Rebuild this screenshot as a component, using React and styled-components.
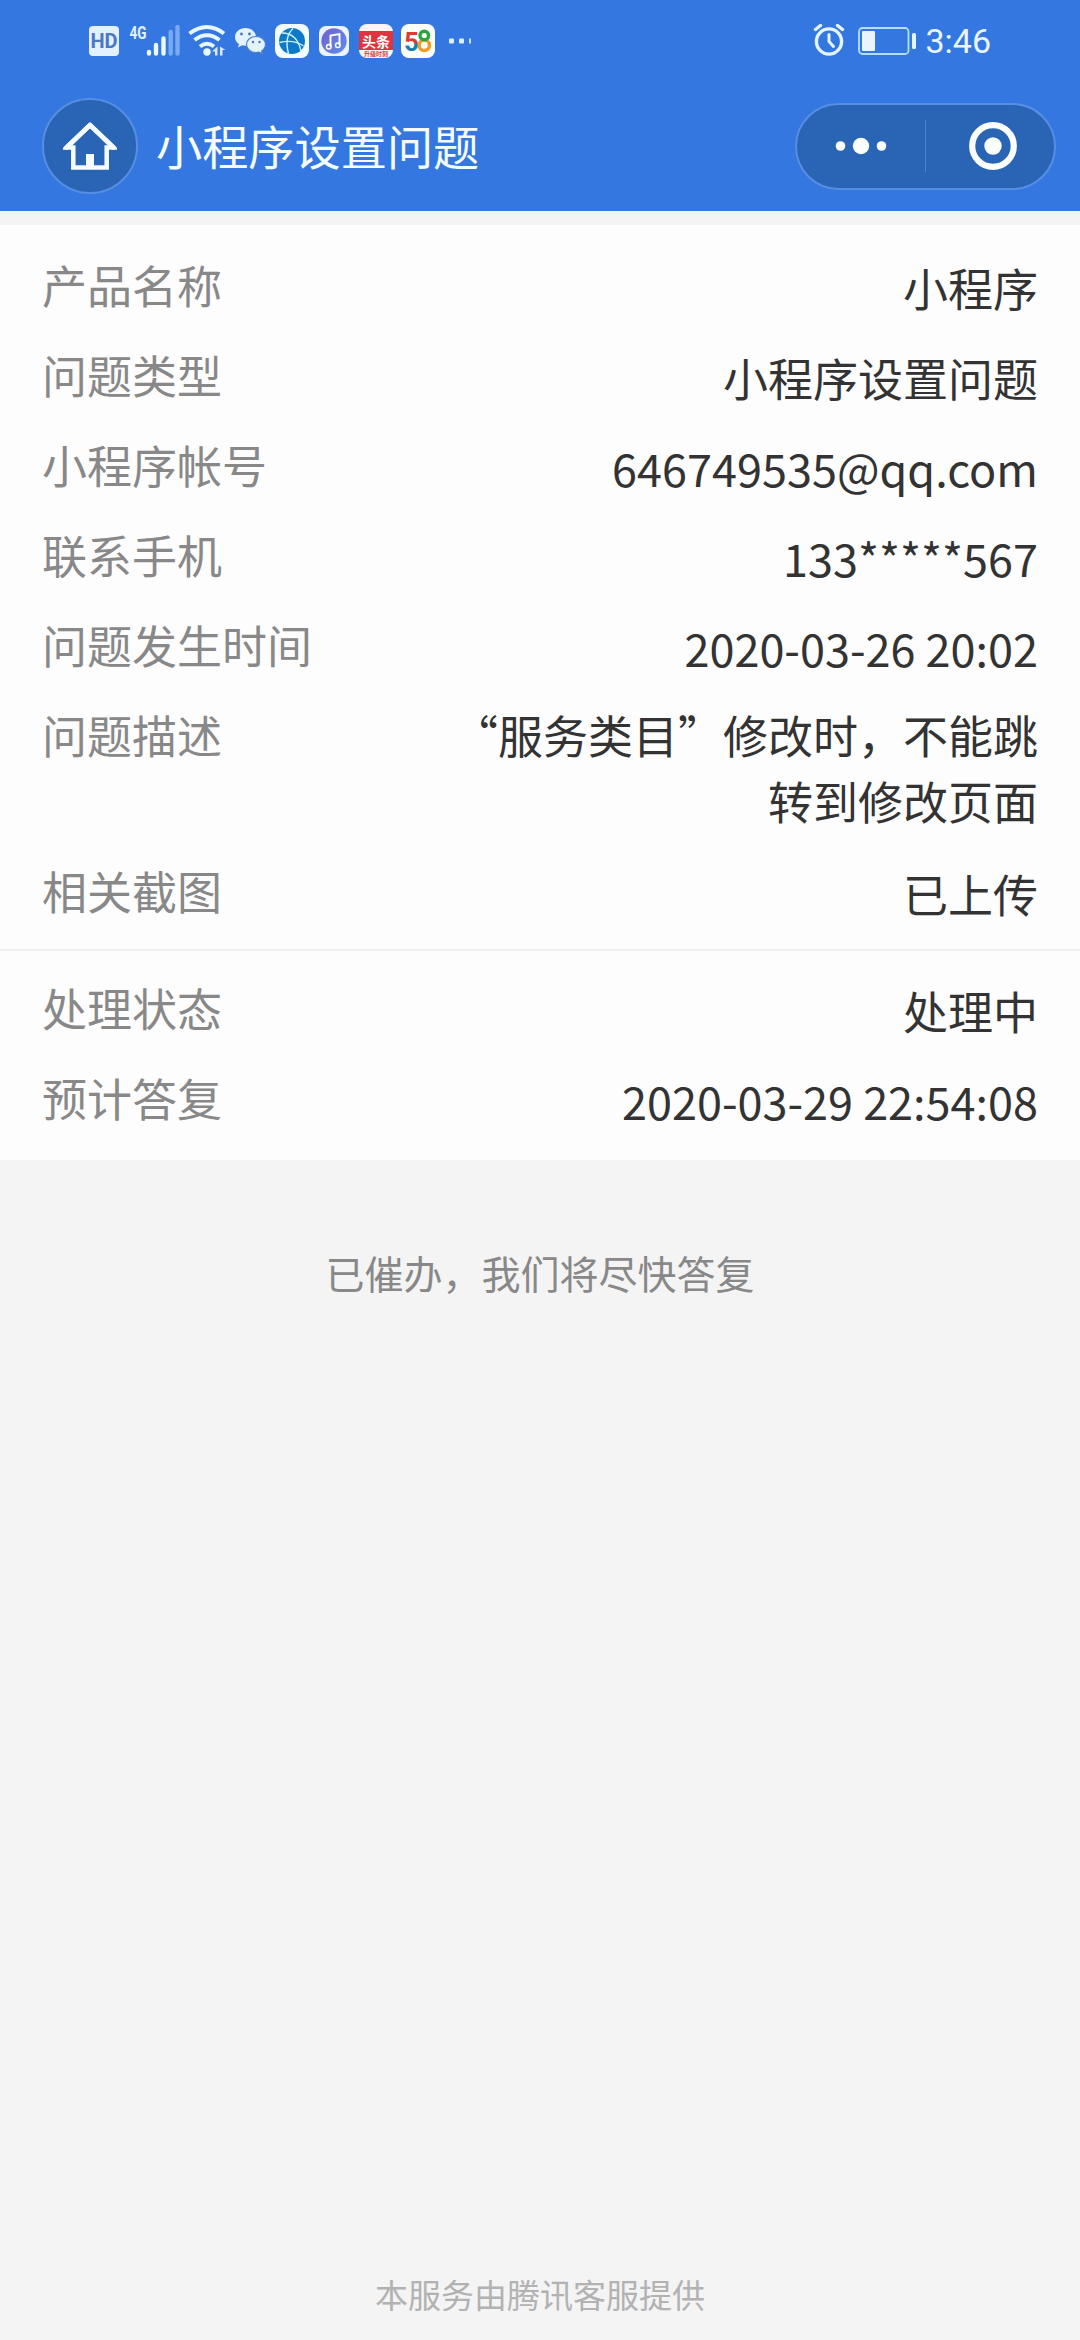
import React from 'react';
import styled, { createGlobalStyle } from 'styled-components';

const GlobalStyle = createGlobalStyle`
  * {
    box-sizing: border-box;
  }

  body {
    margin: 0;
    background-color: #f4f4f4;
    font-family: 'Noto Sans CJK SC', 'Noto Sans', sans-serif;
  }
`;

const Page = styled.div`
  display: flex;
  flex-direction: column;
  width: 1080px;
  height: 2340px;
  background-color: #f4f4f4;
`;

const Header = styled.header`
  height: 211px;
  background-color: #3577e0;
  color: #f4fcff;
`;

const StatusBar = styled.div`
  display: flex;
  justify-content: space-between;
  height: 82px;
  padding: 0 89px;
`;

const StatusGroup = styled.div`
  display: flex;
  align-items: center;
  height: 82px;
`;

const StatusIcon = styled.svg`
  display: block;
  flex: none;
  margin-left: ${(props) => props.$gap || 0}px;
`;

const HdBadge = styled.span`
  width: 30px;
  height: 30px;
  border-radius: 4px;
  background-color: #e3f0ff;
  color: #4a78c4;
  font-family: Roboto, sans-serif;
  font-size: 20px;
  font-weight: 700;
  line-height: 31px;
  text-align: center;
`;

const Clock = styled.span`
  margin-left: 8px;
  font-family: Roboto, sans-serif;
  font-size: 34px;
  line-height: 82px;
  color: #eaf6ff;
`;

const NavBar = styled.div`
  display: flex;
  align-items: center;
  height: 128px;
  padding: 0 24px 0 42px;
`;

const HomeButton = styled.button`
  display: flex;
  align-items: center;
  justify-content: center;
  width: 96px;
  height: 96px;
  padding: 0;
  border: 2px solid #558ee2;
  border-radius: 50%;
  background-color: #2a64b5;
`;

const Title = styled.h1`
  flex: 1;
  margin: 0 0 2px 18px;
  font-size: 46.2px;
  font-weight: 400;
  line-height: 66px;
`;

const Capsule = styled.div`
  display: flex;
  align-items: center;
  width: 261px;
  height: 87px;
  border: 2px solid #558ee2;
  border-radius: 44px;
  background-color: #2a64b5;
`;

const CapsuleButton = styled.button`
  display: flex;
  flex: none;
  align-items: center;
  justify-content: center;
  width: 128px;
  height: 100%;
  padding: 0 0 0 ${(props) => props.$shift || 0}px;
  border: 0;
  background: none;
`;

const CapsuleDivider = styled.span`
  width: 1px;
  height: 52px;
  background-color: #4b83d1;
`;

const Card = styled.main`
  margin-top: 14px;
  background-color: #fdfdfd;
`;

const Section = styled.section`
  display: flex;
  flex-direction: column;
  gap: 24px;
  padding: ${(props) => props.$padding};

  & + & {
    border-top: 2px solid #f0f0f0;
  }
`;

const Row = styled.div`
  display: flex;
  justify-content: space-between;
  font-size: 45px;
  line-height: 66px;
`;

const Label = styled.span`
  color: #888888;
`;

const Value = styled.span`
  max-width: 600px;
  height: ${(props) => (props.$multiline ? 'auto' : '66px')};
  padding-top: ${(props) => (props.$multiline ? 0 : 3)}px;
  color: #333333;
  text-align: right;
`;

const Hint = styled.p`
  margin: 83px 0 0;
  font-size: 39px;
  line-height: 58px;
  color: #888888;
  text-align: center;
`;

const Footer = styled.footer`
  margin-top: auto;
  padding-bottom: 22px;
  font-size: 33px;
  line-height: 48px;
  color: #b2b2b2;
  text-align: center;
`;

const ticket = [
  { label: '产品名称', value: '小程序' },
  { label: '问题类型', value: '小程序设置问题' },
  { label: '小程序帐号', value: '646749535@qq.com' },
  { label: '联系手机', value: '133*****567' },
  { label: '问题发生时间', value: '2020-03-26 20:02' },
  { label: '问题描述', value: '“服务类目”修改时，不能跳转到修改页面', multiline: true },
  { label: '相关截图', value: '已上传' },
];

const progress = [
  { label: '处理状态', value: '处理中' },
  { label: '预计答复', value: '2020-03-29 22:54:08' },
];

const SignalIcon = () => (
  <StatusIcon $gap={6} width="56" height="58" viewBox="125 12 56 58">
    <text x="129.5" y="38.5" fontFamily="Roboto" fontSize="18" fontWeight="700" textLength="17" lengthAdjust="spacingAndGlyphs" fill="#e3f2ff">4G</text>
    <g strokeLinecap="round" strokeWidth="4.4" stroke="#eaf8ff">
      <path d="M149 52v1.5M156 45v8.5M163.5 38.500v15" />
      <path d="M170.700 32v21.500M177.500 27v26.500" stroke="#79a9f0" />
    </g>
  </StatusIcon>
);

const WifiIcon = () => (
  <StatusIcon $gap={7} width="38" height="34" viewBox="188 24 38 34">
    <g fill="none" stroke="#e6f6ff" strokeWidth="4">
      <path d="M189.500 33.500Q207 20.500 224 33.500" />
      <path d="M194.500 40Q207 30.500 219.500 40" />
      <path d="M200 46.500Q207 41 214 46.500" />
    </g>
    <circle cx="207" cy="52" r="3.700" fill="#eaf8ff" />
    <path d="M217.500 46.500v9h-2.500v-4h-3zM220 55.500v-9l5.500 3.500h-3v5.500z" fill="#d8eaff" />
  </StatusIcon>
);

const WechatIcon = () => (
  <StatusIcon $gap={8} width="32" height="34" viewBox="234 24 32 34">
    <path d="M245.500 28c-6 0-10.500 4-10.500 9 0 3 1.500 5.500 4 7l-1 3.500 4.200-2.200c1 .3 2.200.4 3.300.4 6 0 10.500-4 10.500-8.700s-4.500-9-10.500-9z" fill="#e3f2ff" />
    <path d="M256 36.500c-5.300 0-9.500 3.500-9.500 8s4.200 8 9.500 8c1 0 2-.1 3-.4l3.500 2-.9-3.200c2.400-1.500 3.900-3.800 3.900-6.400 0-4.500-4.200-8-9.500-8z" fill="#e3f2ff" stroke="#4a7fd0" strokeWidth="1.200" />
    <g fill="#5076a5">
      <circle cx="241.500" cy="34" r="1.400" />
      <circle cx="249.500" cy="34" r="1.400" />
      <circle cx="253" cy="42" r="1.200" />
      <circle cx="259.500" cy="42" r="1.200" />
    </g>
  </StatusIcon>
);

const BrowserIcon = () => (
  <StatusIcon $gap={9} width="34" height="34">
    <rect width="34" height="34" rx="8" fill="#f2fdff" />
    <circle cx="17" cy="17" r="13" fill="#0d7ac9" />
    <g fill="none" stroke="#c9f0ff" strokeWidth="1.400">
      <path d="M18 4.500Q9 13 13.500 29.500" />
      <path d="M4.500 18.500Q19 15 28.500 22" />
      <path d="M7 9Q22 9 26 27" />
    </g>
  </StatusIcon>
);

const MusicIcon = () => (
  <StatusIcon $gap={10} width="30" height="30">
    <defs>
      <linearGradient id="music" x1="0" y1="0" x2="1" y2="1">
        <stop offset="0" stopColor="#7460cf" />
        <stop offset="1" stopColor="#5c8fe4" />
      </linearGradient>
    </defs>
    <rect width="30" height="30" rx="7" fill="#ecf3ff" />
    <circle cx="15" cy="15" r="12.700" fill="url(#music)" />
    <path d="M11.500 20.500V9.500l9-1.500v11" fill="none" stroke="#fff" strokeWidth="1.900" />
    <circle cx="9.800" cy="20.700" r="2.300" fill="none" stroke="#fff" strokeWidth="1.500" />
    <circle cx="18.800" cy="19.200" r="2.300" fill="none" stroke="#fff" strokeWidth="1.500" />
  </StatusIcon>
);

const ToutiaoIcon = () => (
  <StatusIcon $gap={10} width="34" height="34">
    <rect width="34" height="34" rx="8" fill="#fbf5f7" />
    <rect y="7" width="34" height="19" fill="#e0343e" />
    <text x="17" y="22.500" textAnchor="middle" fontFamily="Noto Sans CJK SC" fontSize="14" fontWeight="700" fill="#fff">头条</text>
    <text x="17" y="32" textAnchor="middle" fontFamily="Noto Sans CJK SC" fontSize="6" fontWeight="700" fill="#d1444e">升级时刻</text>
  </StatusIcon>
);

const FiveEightIcon = () => (
  <StatusIcon $gap={8} width="34" height="34">
    <defs>
      <linearGradient id="five" x1="0" y1="0" x2="0" y2="1">
        <stop offset=".56" stopColor="#df3a35" />
        <stop offset=".56" stopColor="#187fae" />
      </linearGradient>
    </defs>
    <rect width="34" height="34" rx="8" fill="#fbfffa" />
    <text x="3" y="26.500" fontFamily="Roboto" fontSize="26" fontWeight="700" fill="url(#five)">5</text>
    <circle cx="23.300" cy="21.300" r="5.200" fill="none" stroke="#f29a24" strokeWidth="3.400" />
    <circle cx="23.300" cy="11.500" r="4.300" fill="none" stroke="#2ca33c" strokeWidth="3.400" />
  </StatusIcon>
);

const MoreIcon = () => (
  <StatusIcon $gap={14} width="24" height="6">
    <rect x="0" y=".5" width="5" height="5" rx="1" fill="#dcf3ff" />
    <rect x="10" y=".5" width="5" height="5" rx="1" fill="#dcf3ff" />
    <rect x="20" y=".5" width="2" height="5" fill="#c5e3ff" />
  </StatusIcon>
);

const AlarmIcon = () => (
  <StatusIcon width="32" height="34" viewBox="813 24 32 34">
    <g fill="none" stroke="#e3f5ff" strokeLinecap="round">
      <circle cx="829" cy="41.500" r="12.600" strokeWidth="3.400" />
      <path d="M829 34.500v7l4.500 5" strokeWidth="3" />
      <path d="M815.500 29.500l5-4M842.500 29.500l-5-4" strokeWidth="3.400" />
    </g>
  </StatusIcon>
);

const BatteryIcon = () => (
  <StatusIcon $gap={13} width="59" height="28">
    <rect x="1" y="1" width="49.500" height="26" rx="3.500" fill="none" stroke="#b6dcff" strokeWidth="1.800" />
    <rect x="4" y="4" width="13" height="20" rx="1" fill="#eaf4ff" />
    <rect x="54" y="6" width="4" height="16" rx="1.500" fill="#e3f5ff" />
  </StatusIcon>
);

const HomeIcon = () => (
  <svg width="54" height="50" viewBox="0 0 54 50" fill="none" stroke="#f4fcff" strokeWidth="4.500" strokeLinejoin="round" strokeLinecap="round">
    <path d="M10.300 26.500H3.500L27 4l23.500 22.500h-6.800V46.500H10.300z" strokeLinejoin="miter" />
    <path d="M3.500 26.500L27 4l23.500 22.500" />
    <rect x="23" y="33" width="8" height="13" fill="#f4fcff" stroke="none" />
  </svg>
);

const DotsIcon = () => (
  <svg width="52" height="18" fill="#fbfeff">
    <circle cx="5.500" cy="9" r="4.800" />
    <circle cx="26" cy="9" r="8.200" />
    <circle cx="46.500" cy="9" r="4.800" />
  </svg>
);

const TargetIcon = () => (
  <svg width="50" height="50" fill="#fbfeff">
    <circle cx="25" cy="25" r="20.800" fill="none" stroke="#fbfeff" strokeWidth="6.200" />
    <circle cx="25" cy="25" r="8.700" />
  </svg>
);

const Rows = ({ items }) =>
  items.map((item) => (
    <Row key={item.label}>
      <Label>{item.label}</Label>
      <Value $multiline={item.multiline}>{item.value}</Value>
    </Row>
  ));

const App = () => {
  return (
    <Page>
      <GlobalStyle />
      <Header>
        <StatusBar>
          <StatusGroup>
            <HdBadge>HD</HdBadge>
            <SignalIcon />
            <WifiIcon />
            <WechatIcon />
            <BrowserIcon />
            <MusicIcon />
            <ToutiaoIcon />
            <FiveEightIcon />
            <MoreIcon />
          </StatusGroup>
          <StatusGroup>
            <AlarmIcon />
            <BatteryIcon />
            <Clock>3:46</Clock>
          </StatusGroup>
        </StatusBar>
        <NavBar>
          <HomeButton>
            <HomeIcon />
          </HomeButton>
          <Title>小程序设置问题</Title>
          <Capsule>
            <CapsuleButton>
              <DotsIcon />
            </CapsuleButton>
            <CapsuleDivider />
            <CapsuleButton $shift={5}>
              <TargetIcon />
            </CapsuleButton>
          </Capsule>
        </NavBar>
      </Header>
      <Card>
        <Section $padding="27px 42px 25px">
          <Rows items={ticket} />
        </Section>
        <Section $padding="24px 42px 29px">
          <Rows items={progress} />
        </Section>
      </Card>
      <Hint>已催办，我们将尽快答复</Hint>
      <Footer>本服务由腾讯客服提供</Footer>
    </Page>
  );
};

export default App;
